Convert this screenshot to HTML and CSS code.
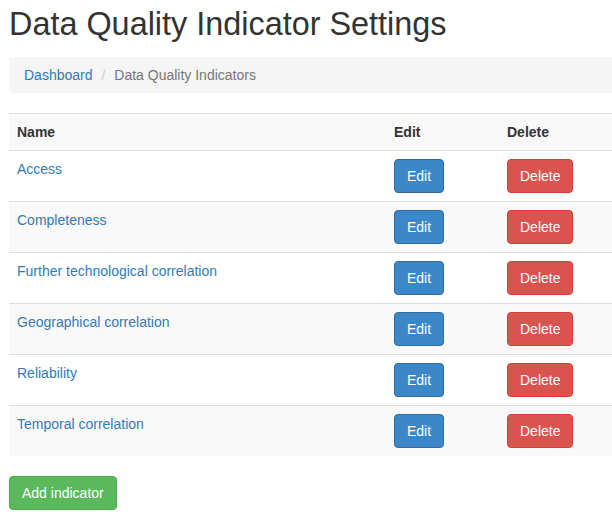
FILE: index.html
```html
<!DOCTYPE html>
<html>
<head>
<meta charset="utf-8">
<link rel="stylesheet" href="styles.css">
</head>
<body>
<div class="container">
  <h1 class="title">Data Quality Indicator Settings</h1>
  <ol class="breadcrumb">
    <li><a href="#">Dashboard</a></li>
    <li class="active">Data Quality Indicators</li>
  </ol>
  <table class="table">
    <colgroup>
      <col class="col-name">
      <col class="col-edit">
      <col class="col-delete">
    </colgroup>
    <tbody>
      <tr><th>Name</th><th>Edit</th><th>Delete</th></tr>
      <tr><td><a href="#">Access</a></td><td><a class="btn btn-primary" href="#">Edit</a></td><td><a class="btn btn-danger" href="#">Delete</a></td></tr>
      <tr><td><a href="#">Completeness</a></td><td><a class="btn btn-primary" href="#">Edit</a></td><td><a class="btn btn-danger" href="#">Delete</a></td></tr>
      <tr><td><a href="#">Further technological correlation</a></td><td><a class="btn btn-primary" href="#">Edit</a></td><td><a class="btn btn-danger" href="#">Delete</a></td></tr>
      <tr><td><a href="#">Geographical correlation</a></td><td><a class="btn btn-primary" href="#">Edit</a></td><td><a class="btn btn-danger" href="#">Delete</a></td></tr>
      <tr><td><a href="#">Reliability</a></td><td><a class="btn btn-primary" href="#">Edit</a></td><td><a class="btn btn-danger" href="#">Delete</a></td></tr>
      <tr><td><a href="#">Temporal correlation</a></td><td><a class="btn btn-primary" href="#">Edit</a></td><td><a class="btn btn-danger" href="#">Delete</a></td></tr>
    </tbody>
  </table>
  <a class="btn btn-success" href="#">Add indicator</a>
</div>
</body>
</html>
```

FILE: styles.css
```css
html, body {
  margin: 0;
  padding: 0;
  overflow: hidden;
  background: #fff;
}
body {
  font-family: "Liberation Sans", Arial, Helvetica, sans-serif;
  font-size: 14px;
  line-height: 1.42857143;
  color: #333;
}
a {
  color: #337ab7;
  text-decoration: none;
}
.container {
  width: 640px;
  padding-left: 9px;
  box-sizing: border-box;
}
.title {
  font-size: 32.4px;
  font-weight: 500;
  line-height: 1.1;
  margin: 7px 0 14px 0;
  color: #333;
}
.breadcrumb {
  list-style: none;
  margin: 0 0 20px 0;
  padding: 8px 15px;
  background: #f5f5f5;
  border-radius: 4px;
  display: flex;
}
.breadcrumb li.active {
  color: #777;
}
.breadcrumb li + li {
  margin-left: 4px;
}
.breadcrumb li + li::before {
  content: "/\00a0";
  padding: 0 5px;
  color: #ccc;
}
.table {
  width: 100%;
  border-collapse: collapse;
  border-spacing: 0;
  table-layout: fixed;
  margin-bottom: 20px;
}
.col-name { width: 377px; }
.col-edit { width: 113px; }
.table th,
.table td {
  padding: 8px;
  text-align: left;
  vertical-align: top;
  border-top: 1px solid #ddd;
  line-height: 1.42857143;
}
.table th {
  font-weight: bold;
}
.table tr:nth-child(odd) {
  background: #f9f9f9;
}
.btn {
  display: inline-block;
  padding: 6px 12px;
  font-size: 14px;
  line-height: 1.42857143;
  border: 1px solid transparent;
  border-radius: 4px;
  color: #fff;
  vertical-align: middle;
  white-space: nowrap;
}
.btn-primary {
  background: #3c87c8;
  border-color: #2e6da4;
}
.btn-danger {
  background: #d9534f;
  border-color: #d43f3a;
}
.btn-success {
  background: #5cb85c;
  border-color: #4cae4c;
}
```
